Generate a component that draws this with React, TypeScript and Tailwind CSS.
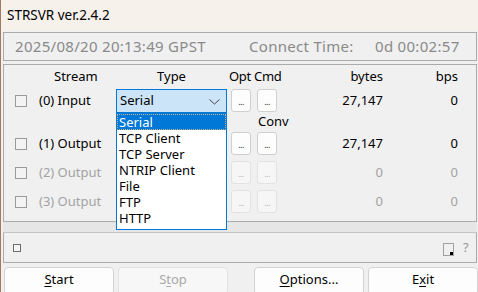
import React from "react";

const font = "font-['Noto_Sans','Liberation_Sans',sans-serif]";

function Check() {
  return <div className="w-[12px] h-[12px] border border-[#9a9a9a] bg-[#f3f3f3] shrink-0" />;
}

function Dots({ disabled }: { disabled?: boolean }) {
  return (
    <div
      className={
        "w-[20px] h-[23px] rounded-[3px] border flex items-end justify-center pb-[5px] shrink-0 " +
        (disabled ? "border-[#e2e2e2] bg-[#f6f6f6] text-[#b8b8b8]" : "border-[#cfcfcf] bg-[#fdfdfd] text-[#333]")
      }
    >
      <span className="text-[9px] leading-[9px] tracking-[-0.5px]">...</span>
    </div>
  );
}

function Row({
  label,
  disabled,
  bytes,
  combo,
}: {
  label: string;
  disabled?: boolean;
  bytes: string;
  combo?: React.ReactNode;
}) {
  const tc = disabled ? "text-[#a3a3a3]" : "text-black";
  return (
    <div className={"flex items-center h-[23px] " + tc}>
      <div className="w-[11px] shrink-0" />
      <Check />
      <div className="w-[89px] pl-[12px] shrink-0 whitespace-nowrap">{label}</div>
      <div className="w-[111px] shrink-0 h-[23px] relative">{combo}</div>
      <div className="w-[4px] shrink-0" />
      <Dots disabled={disabled} />
      <div className="w-[6px] shrink-0" />
      <Dots disabled={disabled} />
      <div className="w-[106px] text-right shrink-0">{bytes}</div>
      <div className="w-[75px] text-right shrink-0">0</div>
    </div>
  );
}

function Combo() {
  const items = ["Serial", "TCP Client", "TCP Server", "NTRIP Client", "File", "FTP", "HTTP"];
  return (
    <>
      <div className="absolute left-0 top-[0px] w-[111px] h-[24px] bg-[#cce4f7] border border-[#0078d7] flex items-center pl-[3px] text-black">
        Serial
        <svg className="absolute right-[6px] top-[9px]" width="11" height="6" viewBox="0 0 11 6">
          <path d="M0.5 0.5 L5.5 5 L10.5 0.5" fill="none" stroke="#444" strokeWidth="1" />
        </svg>
      </div>
      <div className="absolute left-0 top-[24px] w-[111px] h-[117px] bg-white border border-[#0078d7] z-10 text-black">
        {items.map((it, i) => (
          <div
            key={it}
            className={
              "h-[16px] leading-[16px] pl-[2px] whitespace-nowrap " +
              (i === 0 ? "bg-[#0078d7] text-white outline outline-1 outline-dotted outline-[#c9b38a] -outline-offset-1" : "")
            }
          >
            {it}
          </div>
        ))}
      </div>
    </>
  );
}

export default function App() {
  return (
    <div className={"w-[478px] h-[292px] overflow-hidden bg-[#f0f0f0] border-l border-[#a07a62] text-[13px] " + font}>
      <div className="h-[31px] bg-[#f7f1ec] flex items-center pl-[6px] text-[13.5px] text-black">STRSVR ver.2.4.2</div>
      <div className="pl-[2px] pr-[1px]">
        <div className="mt-[1px] h-[29px] border border-[#ababab] flex items-center text-[15px] tracking-[0.3px] text-[#8a8a8a] whitespace-nowrap">
          <div className="pl-[11px] w-[245px]">2025/08/20 20:13:49 GPST</div>
          <div className="w-[126px]">Connect Time:</div>
          <div>0d 00:02:57</div>
        </div>
        <div className="mt-[3px] h-[158px] border border-[#ababab] flex flex-col">
          <div className="h-[24px] flex items-center text-black whitespace-nowrap">
            <div className="w-[50px] shrink-0" />
            <div className="w-[62px] shrink-0">Stream</div>
            <div className="w-[111px] text-center shrink-0">Type</div>
            <div className="w-[2px] shrink-0" />
            <div className="w-[25px] shrink-0 tracking-[-0.3px]">Opt</div>
            <div className="w-[27px] shrink-0 tracking-[-0.3px]">Cmd</div>
            <div className="w-[102px] text-right shrink-0">bytes</div>
            <div className="w-[75px] text-right shrink-0">bps</div>
          </div>
          <Row label="(0) Input" bytes="27,147" combo={<Combo />} />
          <div className="h-[20px] flex items-center text-black">
            <div className="w-[254px] shrink-0" />
            <div>Conv</div>
          </div>
          <Row label="(1) Output" bytes="27,147" />
          <div className="h-[6px]" />
          <Row label="(2) Output" bytes="0" disabled />
          <div className="h-[6px]" />
          <Row label="(3) Output" bytes="0" disabled />
        </div>
        <div className="h-[11px] bg-[#e6e6e6] border-b border-[#c4c4c4]" />
        <div className="h-[30px] border border-t-0 border-[#ababab] flex items-center relative">
          <div className="ml-[9px] w-[8px] h-[8px] border border-[#6e6e6e] bg-[#f5f5f5]" />
          <svg className="absolute left-[439px] top-[10px]" width="12" height="14" viewBox="0 0 12 14">
            <rect x="0.5" y="0.5" width="10" height="12" fill="none" stroke="#555" strokeWidth="1" strokeDasharray="1 1" />
            <rect x="7" y="9" width="3" height="3" fill="#000" />
          </svg>
          <span className="absolute left-[459px] top-[5px] text-[#999] text-[13px]">?</span>
        </div>
      </div>
      <div className="flex mt-[4px] pl-[3px] text-black">
        <div className="w-[110px] h-[28px] rounded-[4px] border border-[#d3d3d3] bg-[#fdfdfd] flex items-center justify-center pb-[2px]">
          <span><span className="underline underline-offset-2">S</span>tart</span>
        </div>
        <div className="ml-[4px] w-[110px] h-[28px] rounded-[4px] border border-[#e3e3e3] bg-[#f7f7f7] flex items-center justify-center pb-[2px] text-[#a8a8a8]">
          <span>S<span className="underline underline-offset-2">t</span>op</span>
        </div>
        <div className="ml-[26px] w-[110px] h-[28px] rounded-[4px] border border-[#d3d3d3] bg-[#fdfdfd] flex items-center justify-center pb-[2px]">
          <span><span className="underline underline-offset-2">O</span>ptions...</span>
        </div>
        <div className="ml-[4px] w-[110px] h-[28px] rounded-[4px] border border-[#d3d3d3] bg-[#fdfdfd] flex items-center justify-center pb-[2px]">
          <span>E<span className="underline underline-offset-2">x</span>it</span>
        </div>
      </div>
    </div>
  );
}
